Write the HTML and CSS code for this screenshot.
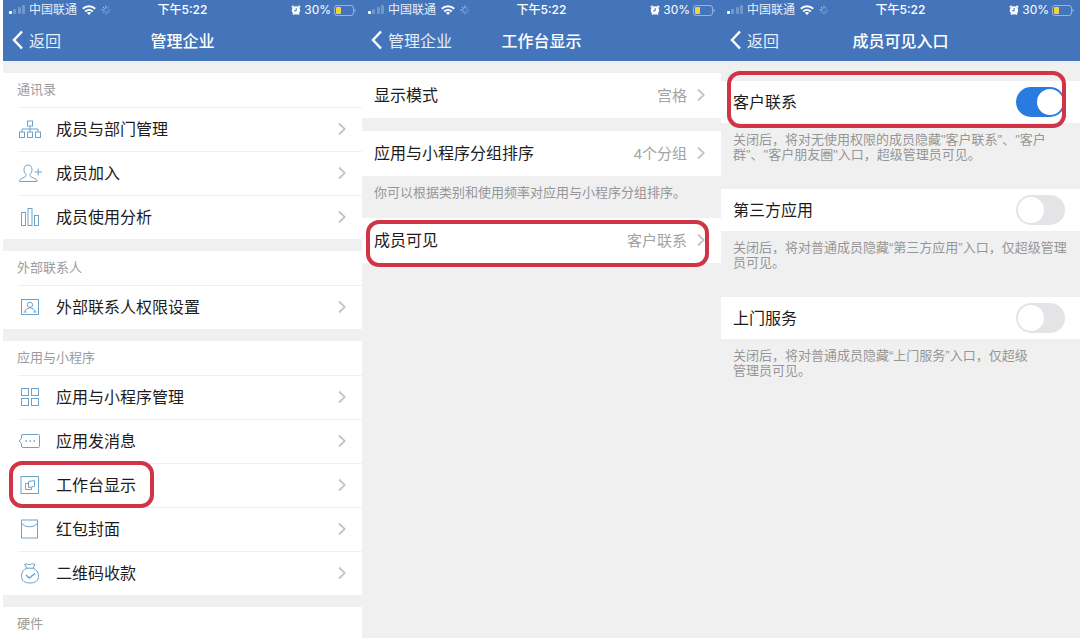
FILE: index.html
```html
<!DOCTYPE html>
<html lang="zh-CN">
<head>
    <meta charset="UTF-8">
    <meta name="viewport" content="width=device-width, initial-scale=1.0">
    <title>管理企业</title>
    <link rel="stylesheet" href="styles.css">
</head>
<body>
    <!-- shared symbols -->
    <svg class="symbols" aria-hidden="true">
        <symbol id="signal" viewBox="0 0 17 10">
            <rect x="0" y="6" width="3" height="3" rx="1" fill="#fff"/>
            <g fill="#fff" opacity="0.25">
                <rect x="4" y="4" width="3" height="5" rx="1"/>
                <rect x="9" y="2" width="3" height="7" rx="1"/>
                <rect x="13" y="0" width="3" height="9" rx="1"/>
            </g>
        </symbol>
        <symbol id="wifi" viewBox="0 0 14 10">
            <g fill="none" stroke="#fff" stroke-width="2">
                <path d="M0.8 3.8C4.4 0.4 9.6 0.4 13.2 3.8"/>
                <path d="M3.2 6.4C5.4 4.4 8.6 4.4 10.8 6.4"/>
            </g>
            <path d="M7 10L4.8 7.8C6 6.7 8 6.7 9.2 7.8Z" fill="#fff"/>
        </symbol>
        <symbol id="spinner" viewBox="0 0 10 10">
            <g stroke="#fff" stroke-linecap="round">
                <path d="M5 1V3M2.2 2.2L3.4 3.4M1 5H3" opacity="0.6"/>
                <path d="M2.2 7.8L3.4 6.6M5 9V7M7.8 7.8L6.6 6.6" opacity="0.4"/>
                <path d="M9 5H7M7.8 2.2L6.6 3.4" opacity="0.25"/>
            </g>
        </symbol>
        <symbol id="alarm" viewBox="0 0 10 10">
            <circle cx="5" cy="5.4" r="4.2" fill="#fff"/>
            <path d="M0.8 2.4L2.6 0.8M9.2 2.4L7.4 0.8M2 9.6L3 8.4M8 9.6L7 8.4" stroke="#fff" stroke-width="1.5"/>
            <path d="M5.2 3V5.8H3" fill="none" stroke="#4475bb"/>
        </symbol>
        <symbol id="battery" viewBox="0 0 22 11">
            <rect x="0.5" y="0.5" width="19" height="10" rx="2.5" fill="none" stroke="#fff" opacity="0.45"/>
            <path d="M21 4V7" stroke="#fff" opacity="0.45"/>
            <rect x="2" y="2" width="5" height="7" rx="1" fill="#f5d33c"/>
        </symbol>
        <symbol id="back" viewBox="0 0 12 20">
            <path d="M10 1.5L2 10L10 18.5" fill="none" stroke="#fff" stroke-width="2.5"/>
        </symbol>
        <symbol id="arrow" viewBox="0 0 8 14">
            <path d="M1 1.5L6.8 7L1 12.5" fill="none" stroke="#c3c3c6" stroke-width="1.8"/>
        </symbol>
    </svg>

    <main class="screens">
        <section class="screen">
            <header class="header">
                <div class="status">
                    <div class="status-left">
                        <svg width="17" height="10"><use href="#signal"/></svg>
                        <span>中国联通</span>
                        <svg class="wifi" width="14" height="10"><use href="#wifi"/></svg>
                        <svg width="10" height="10"><use href="#spinner"/></svg>
                    </div>
                    <time>下午5:22</time>
                    <div class="status-right">
                        <svg width="10" height="10"><use href="#alarm"/></svg>
                        <span>30%</span>
                        <svg width="22" height="11"><use href="#battery"/></svg>
                    </div>
                </div>
                <nav class="navbar">
                    <a class="back" href="#"><svg width="12" height="20"><use href="#back"/></svg>返回</a>
                    <h1>管理企业</h1>
                </nav>
            </header>

            <div class="menu">
                <section class="group">
                    <h2>通讯录</h2>
                    <a class="item" href="#">
                        <svg class="icon" viewBox="0 0 24 22">
                            <rect x="9.5" y="3" width="5" height="5"/>
                            <rect x="1.5" y="14" width="5" height="5.5"/>
                            <rect x="9.5" y="14" width="5" height="5.5"/>
                            <rect x="17.5" y="14" width="5" height="5.5"/>
                            <path d="M12 8V14M4 14V11H20V14"/>
                        </svg>
                        <span>成员与部门管理</span>
                        <svg class="arrow"><use href="#arrow"/></svg>
                    </a>
                    <a class="item" href="#">
                        <svg class="icon" viewBox="0 0 24 22">
                            <path d="M8 12.5C6.6 11 6 9.6 6 7.5C6 4.6 7.6 3 10 3C12.4 3 14 4.6 14 7.5C14 9.6 13.4 11 12 12.5C11.8 14.5 13 15 15.5 16C18 17 19 17.5 19 19.5H1.5C1.5 17.5 2.5 17 4.8 16C7 15 8.2 14.5 8 12.5Z"/>
                            <path d="M16.5 10H24M20.2 6.5V13.5"/>
                        </svg>
                        <span>成员加入</span>
                        <svg class="arrow"><use href="#arrow"/></svg>
                    </a>
                    <a class="item" href="#">
                        <svg class="icon" viewBox="0 0 24 22">
                            <rect x="3.5" y="6.5" width="4" height="13"/>
                            <rect x="10" y="2.5" width="4" height="17"/>
                            <rect x="16.5" y="9.5" width="4" height="10"/>
                        </svg>
                        <span>成员使用分析</span>
                        <svg class="arrow"><use href="#arrow"/></svg>
                    </a>
                </section>

                <section class="group">
                    <h2>外部联系人</h2>
                    <a class="item" href="#">
                        <svg class="icon" viewBox="0 0 24 22">
                            <rect x="3.5" y="3.5" width="17" height="15"/>
                            <circle cx="12" cy="8.8" r="2.6"/>
                            <path d="M7 16C7 10.6 17 10.6 17 16M5.5 16H8.5M15.5 16H18.5"/>
                        </svg>
                        <span>外部联系人权限设置</span>
                        <svg class="arrow"><use href="#arrow"/></svg>
                    </a>
                </section>

                <section class="group">
                    <h2>应用与小程序</h2>
                    <a class="item" href="#">
                        <svg class="icon" viewBox="0 0 24 22">
                            <rect x="3.5" y="2.5" width="7" height="7"/>
                            <rect x="13.5" y="2.5" width="7" height="7"/>
                            <rect x="3.5" y="12.5" width="7" height="7"/>
                            <rect x="13.5" y="12.5" width="7" height="7"/>
                        </svg>
                        <span>应用与小程序管理</span>
                        <svg class="arrow"><use href="#arrow"/></svg>
                    </a>
                    <a class="item" href="#">
                        <svg class="icon" viewBox="0 0 24 22">
                            <path d="M5 4.5H20.5Q21.5 4.5 21.5 5.5V16.5Q21.5 17.5 20.5 17.5H5Q3.5 17.5 3.5 16V13.5L1 11L3.5 8.5V6Q3.5 4.5 5 4.5Z"/>
                            <path d="M7.5 11H9M11.5 11H13M15.5 11H17" stroke-width="1.5"/>
                        </svg>
                        <span>应用发消息</span>
                        <svg class="arrow"><use href="#arrow"/></svg>
                    </a>
                    <a class="item" href="#">
                        <svg class="icon" viewBox="0 0 24 22">
                            <rect x="3" y="2.5" width="17.5" height="17"/>
                            <path d="M10.5 9.5H7.5V15.5H13.5V13.5"/>
                            <path d="M10.5 7.5L16.5 6.5V12.5L10.5 13.5Z"/>
                        </svg>
                        <span>工作台显示</span>
                        <svg class="arrow"><use href="#arrow"/></svg>
                        <i class="mark mark-workbench"></i>
                    </a>
                    <a class="item" href="#">
                        <svg class="icon" viewBox="0 0 24 22">
                            <rect x="3.5" y="2" width="16" height="18"/>
                            <path d="M3.5 5C6 10 17 10 19.5 5"/>
                        </svg>
                        <span>红包封面</span>
                        <svg class="arrow"><use href="#arrow"/></svg>
                    </a>
                    <a class="item" href="#">
                        <svg class="icon" viewBox="0 0 24 22">
                            <path d="M9 6.2C5.6 7.2 3.5 10.4 3.5 14C3.5 18.6 6.5 21 12 21C17.5 21 20.5 18.6 20.5 14C20.5 10.4 18.4 7.2 15 6.2Z"/>
                            <path d="M9 6.2L6.5 2.2C9 1.2 10.5 3.4 12.5 2.4C14 1.7 15.8 1.8 17 2.5L15 6.2"/>
                            <path d="M8 13L11.2 16L17 11.5" stroke-width="1.5"/>
                        </svg>
                        <span>二维码收款</span>
                        <svg class="arrow"><use href="#arrow"/></svg>
                    </a>
                </section>

                <section class="group">
                    <h2>硬件</h2>
                </section>
            </div>
        </section>

        <section class="screen">
            <header class="header">
                <div class="status">
                    <div class="status-left">
                        <svg width="17" height="10"><use href="#signal"/></svg>
                        <span>中国联通</span>
                        <svg class="wifi" width="14" height="10"><use href="#wifi"/></svg>
                        <svg width="10" height="10"><use href="#spinner"/></svg>
                    </div>
                    <time>下午5:22</time>
                    <div class="status-right">
                        <svg width="10" height="10"><use href="#alarm"/></svg>
                        <span>30%</span>
                        <svg width="22" height="11"><use href="#battery"/></svg>
                    </div>
                </div>
                <nav class="navbar">
                    <a class="back" href="#"><svg width="12" height="20"><use href="#back"/></svg>管理企业</a>
                    <h1>工作台显示</h1>
                </nav>
            </header>

            <div class="display">
                <a class="option" href="#">
                    <span>显示模式</span>
                    <span class="value">宫格</span>
                    <svg class="arrow"><use href="#arrow"/></svg>
                </a>
                <div>
                    <a class="option" href="#">
                        <span>应用与小程序分组排序</span>
                        <span class="value">4个分组</span>
                        <svg class="arrow"><use href="#arrow"/></svg>
                    </a>
                    <p class="note">你可以根据类别和使用频率对应用与小程序分组排序。</p>
                </div>
                <a class="option" href="#">
                    <span>成员可见</span>
                    <span class="value">客户联系</span>
                    <svg class="arrow"><use href="#arrow"/></svg>
                    <i class="mark mark-visible"></i>
                </a>
            </div>
        </section>

        <section class="screen">
            <header class="header">
                <div class="status">
                    <div class="status-left">
                        <svg width="17" height="10"><use href="#signal"/></svg>
                        <span>中国联通</span>
                        <svg class="wifi" width="14" height="10"><use href="#wifi"/></svg>
                        <svg width="10" height="10"><use href="#spinner"/></svg>
                    </div>
                    <time>下午5:22</time>
                    <div class="status-right">
                        <svg width="10" height="10"><use href="#alarm"/></svg>
                        <span>30%</span>
                        <svg width="22" height="11"><use href="#battery"/></svg>
                    </div>
                </div>
                <nav class="navbar">
                    <a class="back" href="#"><svg width="12" height="20"><use href="#back"/></svg>返回</a>
                    <h1>成员可见入口</h1>
                </nav>
            </header>

            <div class="switches">
                <div>
                    <div class="switch-row">
                        <label for="customer">客户联系</label>
                        <input class="switch" type="checkbox" id="customer" checked>
                        <i class="mark mark-customer"></i>
                    </div>
                    <p class="note">关闭后，将对无使用权限的成员隐藏"客户联系"、"客户<br>群"、"客户朋友圈"入口，超级管理员可见。</p>
                </div>
                <div>
                    <div class="switch-row">
                        <label for="third">第三方应用</label>
                        <input class="switch" type="checkbox" id="third">
                    </div>
                    <p class="note">关闭后，将对普通成员隐藏“第三方应用”入口，仅超级管理<br>员可见。</p>
                </div>
                <div>
                    <div class="switch-row">
                        <label for="visit">上门服务</label>
                        <input class="switch" type="checkbox" id="visit">
                    </div>
                    <p class="note">关闭后，将对普通成员隐藏“上门服务”入口，仅超级<br>管理员可见。</p>
                </div>
            </div>
        </section>
    </main>
</body>
</html>
```
FILE: styles.css
```css
* {
    box-sizing: border-box;
}
body {
    margin: 0;
    padding-left: 3px;
    font-family: "Liberation Sans", "Noto Sans CJK SC", sans-serif;
    font-size: 16px;
    color: #1c1c1c;
    background-color: #fff;
}
h1, h2, p {
    margin: 0;
}
a {
    color: inherit;
    text-decoration: none;
}
svg {
    flex: none;
}
.symbols {
    display: none;
}
.screens {
    display: grid;
    grid-template-columns: repeat(3, 1fr);
    height: 100vh;
    overflow: hidden;
}
.screen {
    background-color: #f0f0f1;
}

/* header */
.header {
    background-color: #4475bb;
    color: #fff;
    padding-bottom: 1px;
}
.status,
.navbar {
    display: grid;
    grid-template-columns: 1fr auto 1fr;
    align-items: center;
}
.status {
    height: 20px;
    padding: 0 6px;
    font-family: Inter, "Noto Sans CJK SC", sans-serif;
    font-size: 12px;
    line-height: 20px;
}
.status-left,
.status-right {
    display: flex;
    align-items: center;
    gap: 3px;
}
.status-left,
.back {
    color: #e6eefa;
}
.wifi {
    margin: 0 2px;
}
.status-right {
    justify-content: flex-end;
}
.status time {
    font-weight: 500;
}
.navbar {
    height: 40px;
    padding: 0 9px;
}
.back {
    display: flex;
    align-items: center;
    gap: 5px;
}
.navbar h1 {
    grid-column: 2;
    font-size: 16px;
    font-weight: 500;
}

/* first screen */
.menu {
    display: grid;
    gap: 12px;
    padding-top: 12px;
}
.group {
    background-color: #fff;
}
.group h2 {
    height: 34px;
    padding-left: 14px;
    font-size: 13px;
    font-weight: 400;
    line-height: 34px;
    color: #9c9c9c;
}
.item {
    position: relative;
    display: flex;
    align-items: center;
    height: 44px;
    margin-left: 15px;
    padding: 0 16px 2px 0;
    border-top: 1px solid #efefef;
}
.item span,
.option span,
.switch-row label {
    padding-bottom: 2px;
}
.icon {
    width: 24px;
    height: 22px;
    margin-right: 14px;
    fill: none;
    stroke: #6ba3cc;
    stroke-width: 1;
}
.arrow {
    width: 8px;
    height: 14px;
    margin-left: auto;
}

/* second screen */
.display {
    display: grid;
    gap: 13px;
    padding-top: 12px;
}
.option {
    position: relative;
    display: flex;
    align-items: center;
    height: 45px;
    padding: 0 16px 1px 12px;
    background-color: #fff;
}
.option .arrow {
    margin-left: 10px;
}
.value {
    margin-left: auto;
    font-size: 15px;
    color: #a3a3a3;
}
.note {
    padding: 9px 0 0 12px;
    font-size: 13px;
    line-height: 15px;
    color: #969696;
    white-space: nowrap;
}
.display .note {
    padding-bottom: 5px;
}

/* third screen */
.switches {
    display: grid;
    gap: 27px;
    padding-top: 20px;
}
.switch-row {
    position: relative;
    display: flex;
    align-items: center;
    justify-content: space-between;
    height: 42px;
    padding: 0 15px 0 12px;
    background-color: #fff;
}
.switch {
    appearance: none;
    width: 49px;
    height: 30px;
    margin: 0;
    padding: 2px;
    display: flex;
    border-radius: 15px;
    background-color: #e4e4e7;
}
.switch::before {
    content: "";
    width: 26px;
    height: 26px;
    border-radius: 50%;
    background-color: #fff;
}
.switch:checked {
    justify-content: flex-end;
    background-color: #2a7be0;
}

/* red frames drawn over the rows */
.mark {
    position: absolute;
    z-index: 1;
    border: 4px solid #cf3547;
    border-radius: 13px;
    pointer-events: none;
}
.mark-workbench {
    top: -3px;
    left: -9px;
    width: 145px;
    height: 47px;
}
.mark-visible {
    top: 2px;
    right: 12px;
    bottom: -4px;
    left: 4px;
}
.mark-customer {
    top: -10px;
    right: 14px;
    bottom: -5px;
    left: 6px;
}
```
